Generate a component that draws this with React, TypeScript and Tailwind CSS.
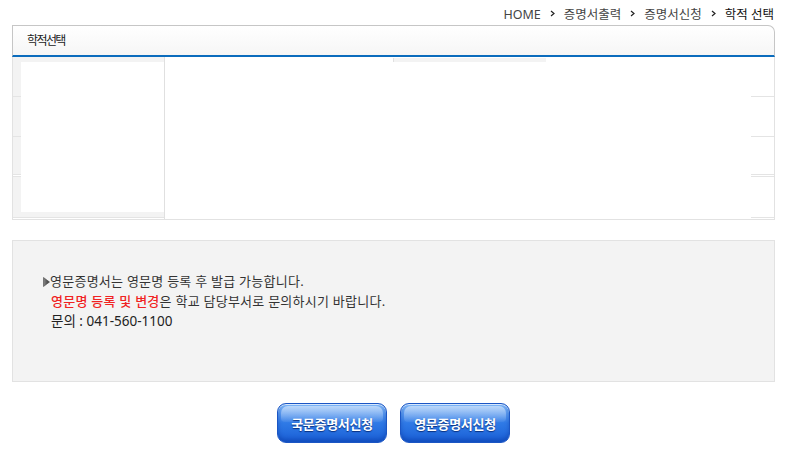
import React from 'react';

const KR = { fontFamily: '"Noto Sans", "Noto Sans CJK KR", sans-serif' };

function Crumb() {
  return (
    <svg width="5" height="7" viewBox="0 0 5 7" className="mx-[9px] -mt-[4px]">
      <path d="M1 1 L4 3.5 L1 6" fill="none" stroke="#222" strokeWidth="1.2" />
    </svg>
  );
}

function Bullet() {
  return (
    <svg width="7" height="10" viewBox="0 0 7 10" className="inline-block -mt-[2px] align-middle">
      <defs>
        <linearGradient id="tri" x1="0" y1="0" x2="1" y2="0">
          <stop offset="0" stopColor="#888" />
          <stop offset="1" stopColor="#333" />
        </linearGradient>
      </defs>
      <path d="M0.5 0.5 L6.5 5 L0.5 9.5 Z" fill="url(#tri)" stroke="#444" strokeWidth="0.6" />
    </svg>
  );
}

function BlueButton({ label }: { label: string }) {
  return (
    <button className="relative w-[110px] h-[40px] rounded-[9px] border border-[#1b56c4] bg-gradient-to-b from-[#7fb6f6] via-[#2f7ae6] to-[#1a5fd6] shadow-[inset_0_1px_0_rgba(255,255,255,0.7),inset_0_-3px_4px_rgba(0,40,140,0.35)] overflow-hidden">
      <span className="absolute left-[3px] right-[3px] top-[2px] h-[16px] rounded-t-[7px] rounded-b-[4px] bg-gradient-to-b from-white/50 to-white/5" />
      <span className="relative text-white text-[13px] font-bold tracking-[-0.3px] [text-shadow:0_1px_1px_rgba(0,30,100,0.8)]">{label}</span>
    </button>
  );
}

export default function App() {
  const rows = [40, 40, 40, 41];
  return (
    <div className="w-[798px] h-[452px] bg-white text-[#333]" style={KR}>
      <div className="ml-[12px] w-[763px]">
        {/* Breadcrumb */}
        <div className="h-[25px] flex items-center justify-end pr-[1px] pt-[6px] text-[12.5px] text-[#444]">
          <span>HOME</span>
          <Crumb />
          <span>증명서출력</span>
          <Crumb />
          <span>증명서신청</span>
          <Crumb />
          <span className="text-[#111]">학적 선택</span>
        </div>

        {/* Tab header */}
        <div className="h-[32px] border-t border-l border-r border-[#c6c6c6] rounded-tr-[7px] border-b-2 border-b-[#0b6cbd] bg-gradient-to-b from-white to-[#f6f6f6] flex items-center pl-[14px]">
          <span className="text-[12px] tracking-[-1.6px] text-[#222]">학적선택</span>
        </div>

        {/* Table area */}
        <div className="relative h-[163px] border-l border-r border-b border-[#e2e2e2] flex flex-col">
          {rows.map((h, i) => (
            <div key={i} className={`flex ${i === 2 ? 'border-b-[3px] border-double' : 'border-b'} border-[#e4e4e4] last:border-b-0`} style={{ height: h }}>
              <div className="w-[152px] bg-[#f3f3f3] border-r border-[#e0e0e0]" />
              <div className="flex-1 bg-white" />
            </div>
          ))}
          {/* white overlays */}
          <div className="absolute left-[8px] top-[5px] w-[143px] h-[150px] bg-white" />
          <div className="absolute left-[151px] top-0 bottom-0 w-[587px] bg-white border-l border-[#e0e0e0]">
            <div className="ml-[228px] mt-[1px] w-[153px] h-[4px] bg-[#f3f3f3] border-l border-[#e0e0e0]" />
          </div>
        </div>

        {/* Notice */}
        <div className="mt-[20px] h-[142px] border border-[#e2e2e2] bg-[#f3f3f3] pt-[30px] pl-[30px] text-[13px] leading-[20px] tracking-[0.25px] text-[#333]">
          <p>
            <Bullet />
            영문증명서는 영문명 등록 후 발급 가능합니다.
          </p>
          <p className="pl-[8px]">
            <span className="text-[#f02323] font-medium">영문명 등록 및 변경</span>은 학교 담당부서로 문의하시기 바랍니다.
          </p>
          <p className="pl-[8px] text-[13.5px] tracking-normal text-[#222]">문의 : 041-560-1100</p>
        </div>

        {/* Buttons */}
        <div className="mt-[21px] flex justify-center gap-[13px]">
          <BlueButton label="국문증명서신청" />
          <BlueButton label="영문증명서신청" />
        </div>
      </div>
    </div>
  );
}
